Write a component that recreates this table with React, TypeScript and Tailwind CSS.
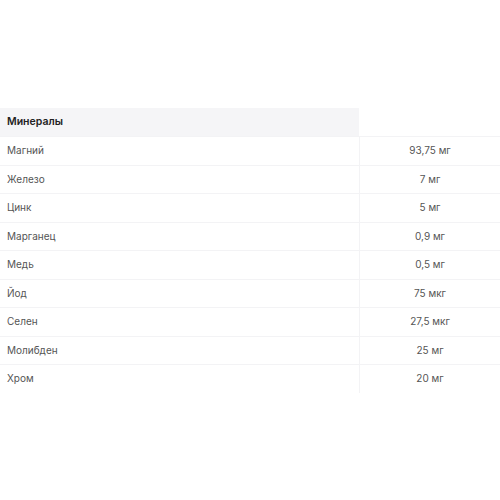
import React from "react";

const rows: [string, string][] = [
  ["Магний", "93,75 мг"],
  ["Железо", "7 мг"],
  ["Цинк", "5 мг"],
  ["Марганец", "0,9 мг"],
  ["Медь", "0,5 мг"],
  ["Йод", "75 мкг"],
  ["Селен", "27,5 мкг"],
  ["Молибден", "25 мг"],
  ["Хром", "20 мг"],
];

export default function App() {
  return (
    <div
      className="w-[500px] h-[500px] bg-white pt-[108px]"
      style={{ fontFamily: "Inter, 'Noto Sans', sans-serif" }}
    >
      <div className="flex h-[28px]">
        <div className="w-[359px] bg-[#f5f5f7] flex items-center pl-[7px] text-[10.5px] font-semibold text-[#222]">
          Минералы
        </div>
        <div className="flex-1" />
      </div>
      {rows.map(([name, value]) => (
        <div key={name} className="flex h-[28.5px] border-t border-[#f3f3f5]">
          <div className="w-[359px] flex items-center pl-[7px] text-[10px] text-[#555]">
            {name}
          </div>
          <div className="flex-1 border-l border-[#f3f3f5] flex items-center justify-center text-[10px] text-[#555]">
            {value}
          </div>
        </div>
      ))}
    </div>
  );
}
